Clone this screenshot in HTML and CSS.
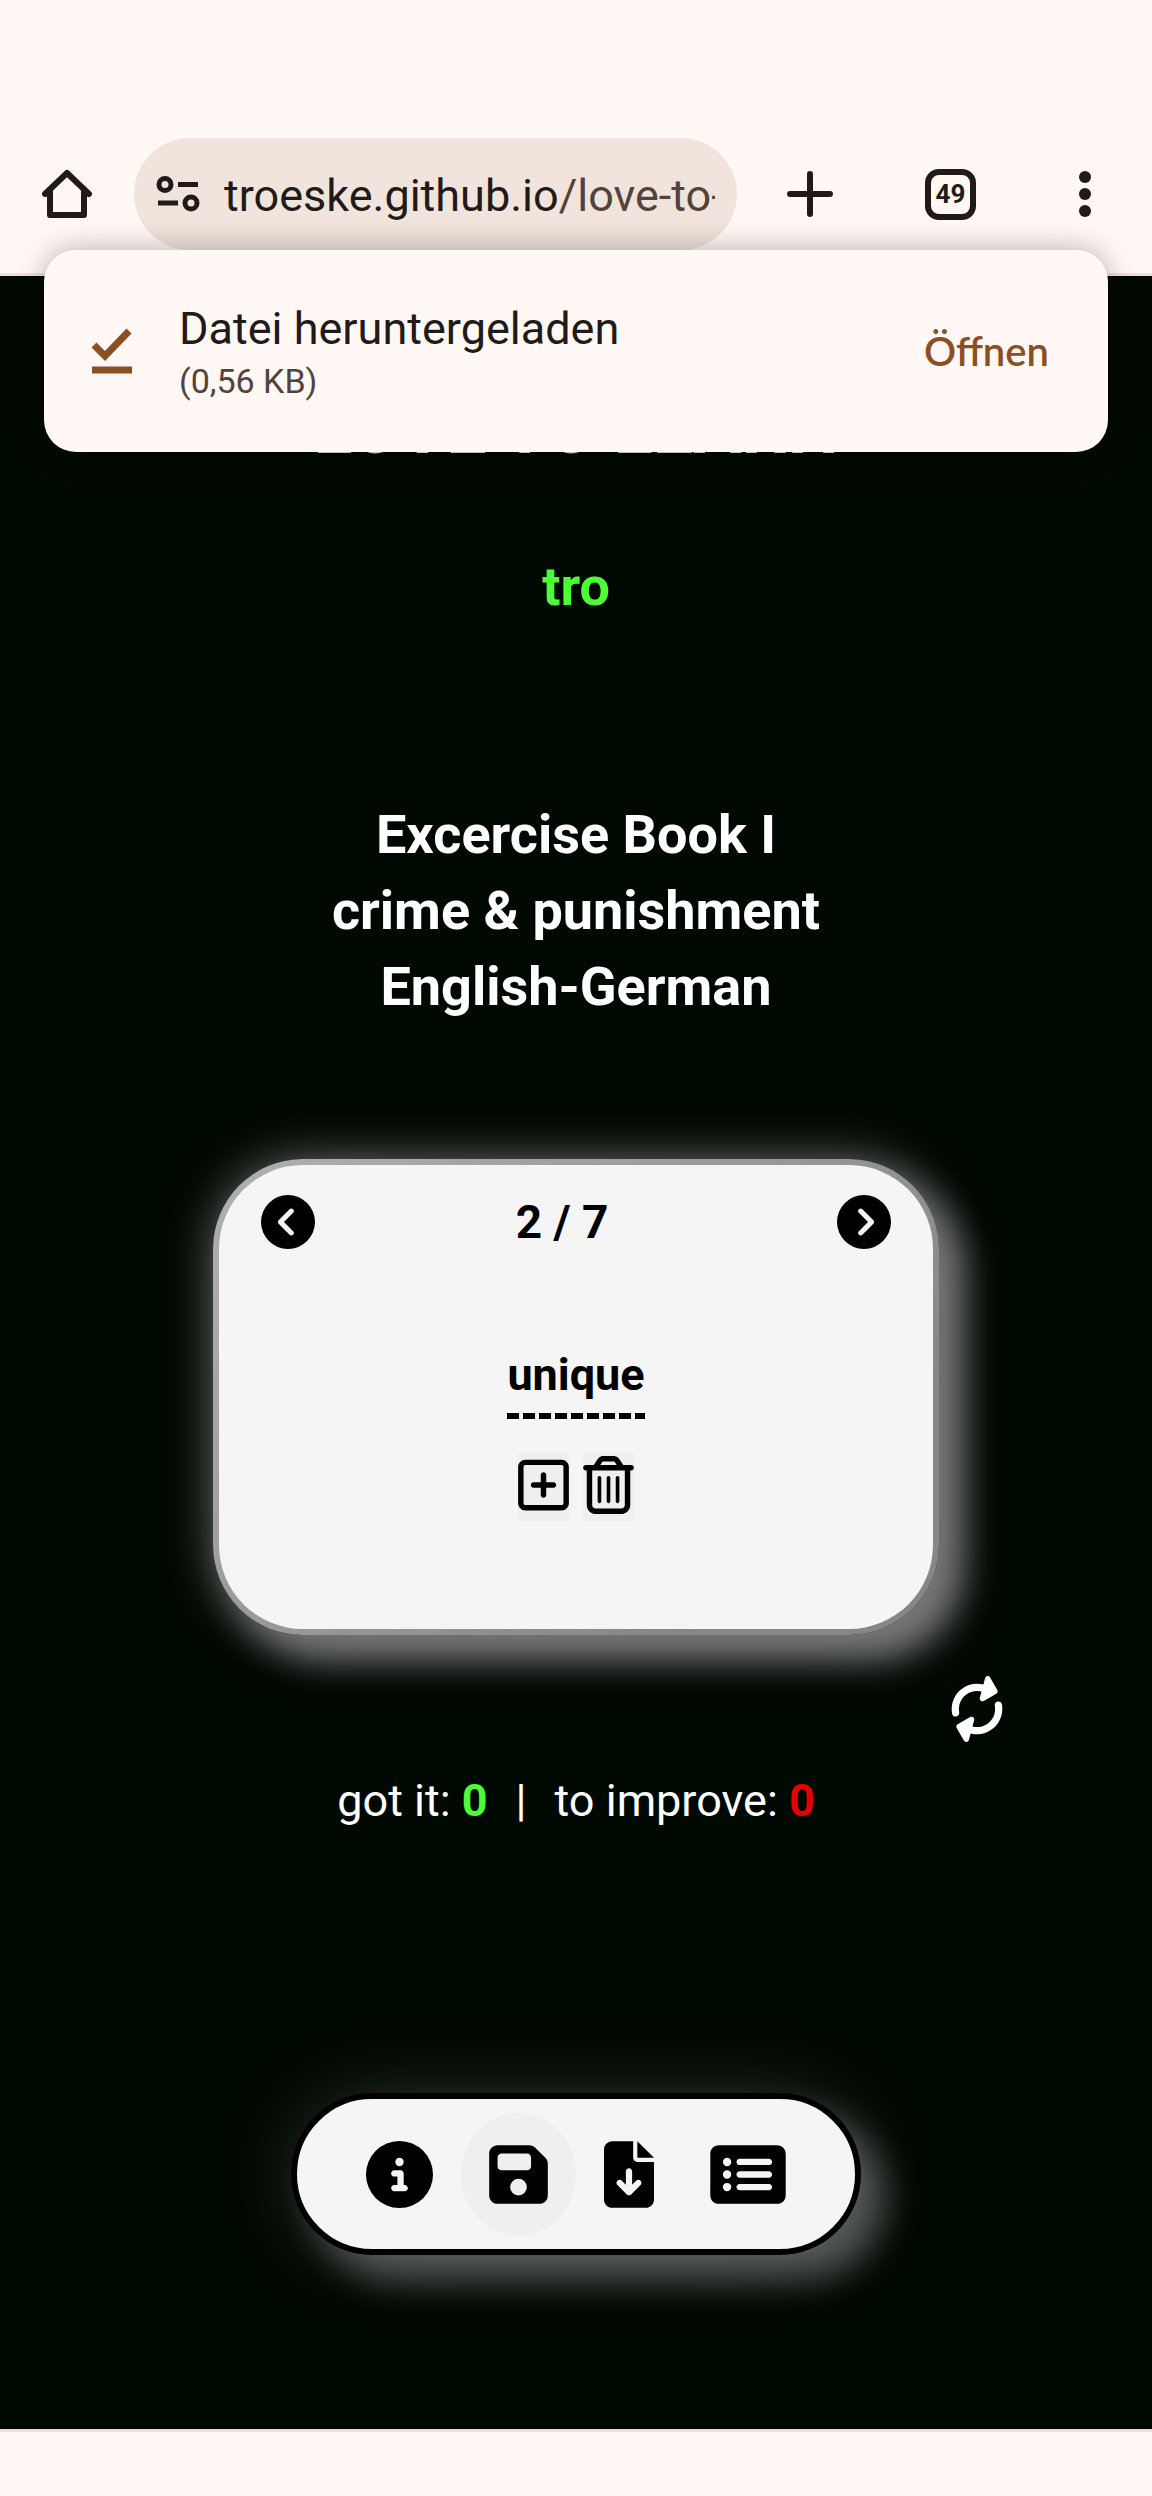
FILE: index.html
```html
<!DOCTYPE html>
<html lang="en">
<head>
<meta charset="utf-8">
<meta name="viewport" content="width=device-width, initial-scale=1">
<title>Love to learn</title>
<link rel="stylesheet" href="styles.css">
</head>
<body>
<header class="toolbar">
  <button class="tool" aria-label="Home"><svg width="50" height="50" viewBox="0 0 50 50" fill="none" stroke="currentColor" stroke-width="6" stroke-linejoin="round" stroke-linecap="round"><path d="M3 25 25 4 47 25M8 22V46H42V22"/></svg></button>
  <div class="address">
    <svg width="44" height="36" viewBox="0 0 44 36" fill="none" stroke="currentColor" stroke-width="5"><circle cx="9" cy="8.500" r="6"/><path d="M22 8.500H42M2 27H22"/><circle cx="35" cy="27" r="6"/></svg>
    <div class="url">troeske.github.io<span class="path">/love-to-</span></div>
  </div>
  <button class="tool" aria-label="New tab"><svg width="46" height="46" viewBox="0 0 46 46" stroke="currentColor" stroke-width="6" stroke-linecap="round"><path d="M3 23H43M23 3V43"/></svg></button>
  <button class="tool tabs" aria-label="Tabs">49</button>
  <button class="tool" aria-label="Menu"><svg width="12" height="46" viewBox="0 0 12 46" fill="currentColor"><circle cx="6" cy="6" r="6"/><circle cx="6" cy="23" r="6"/><circle cx="6" cy="40" r="6"/></svg></button>
</header>

<aside class="toast">
  <svg width="42" height="46" viewBox="0 0 42 46" fill="none" stroke="currentColor" stroke-width="7"><path d="M3 17 14 28 38 3M1 42H41"/></svg>
  <div class="toast-text">
    <div class="toast-title">Datei heruntergeladen</div>
    <div class="toast-size">(0,56 KB)</div>
  </div>
  <button class="open">Öffnen</button>
</aside>

<main class="page">
  <h1 class="brand">LOVE TO LEARN</h1>
  <p class="user">tro</p>
  <h2 class="book">Excercise Book I<br>crime &amp; punishment<br>English-German</h2>

  <section class="card">
    <div class="card-head">
      <button class="icon" aria-label="Previous"><svg width="54" height="54" viewBox="0 0 512 512"><path d="M512 256A256 256 0 1 0 0 256a256 256 0 1 0 512 0zM271 135c9.400-9.400 24.600-9.400 33.900 0s9.400 24.600 0 33.900l-87 87 87 87c9.400 9.400 9.400 24.600 0 33.900s-24.600 9.400-33.900 0L167 273c-9.400-9.400-9.400-24.600 0-33.900L271 135z"/></svg></button>
      <span class="count">2 / 7</span>
      <button class="icon" aria-label="Next"><svg width="54" height="54" viewBox="0 0 512 512"><path transform="matrix(-1 0 0 1 512 0)" d="M512 256A256 256 0 1 0 0 256a256 256 0 1 0 512 0zM271 135c9.400-9.400 24.600-9.400 33.900 0s9.400 24.600 0 33.900l-87 87 87 87c9.400 9.400 9.400 24.600 0 33.900s-24.600 9.400-33.900 0L167 273c-9.400-9.400-9.400-24.600 0-33.900L271 135z"/></svg></button>
    </div>
    <div class="word">unique</div>
    <div class="card-tools">
      <button class="icon edit" aria-label="Add"><svg width="51" height="58" viewBox="0 0 448 512"><path d="M64 80c-8.800 0-16 7.200-16 16V416c0 8.800 7.200 16 16 16H384c8.800 0 16-7.200 16-16V96c0-8.800-7.200-16-16-16H64zM0 96C0 60.700 28.700 32 64 32H384c35.300 0 64 28.700 64 64V416c0 35.300-28.700 64-64 64H64c-35.300 0-64-28.700-64-64V96zM200 344V280H136c-13.300 0-24-10.700-24-24s10.700-24 24-24h64V168c0-13.300 10.700-24 24-24s24 10.700 24 24v64h64c13.300 0 24 10.700 24 24s-10.700 24-24 24H248v64c0 13.300-10.700 24-24 24s-24-10.700-24-24z"/></svg></button>
      <button class="icon edit" aria-label="Delete"><svg width="51" height="58" viewBox="0 0 448 512"><path d="M170.500 51.600L151.500 80h145l-19-28.400c-1.500-2.200-4-3.600-6.700-3.600H177.100c-2.700 0-5.200 1.300-6.700 3.600zm147-26.600L354.200 80H368h48 8c13.300 0 24 10.700 24 24s-10.700 24-24 24h-8V432c0 44.200-35.800 80-80 80H112c-44.200 0-80-35.800-80-80V128H24c-13.300 0-24-10.700-24-24S10.700 80 24 80h8H80 93.800l36.700-55.100C140.900 9.400 158.400 0 177.100 0h93.700c18.700 0 36.200 9.400 46.600 24.900zM80 128V432c0 17.700 14.300 32 32 32H336c17.700 0 32-14.300 32-32V128H80zm80 64V400c0 8.800-7.200 16-16 16s-16-7.200-16-16V192c0-8.800 7.200-16 16-16s16 7.200 16 16zm80 0V400c0 8.800-7.200 16-16 16s-16-7.200-16-16V192c0-8.800 7.200-16 16-16s16 7.200 16 16zm80 0V400c0 8.800-7.200 16-16 16s-16-7.200-16-16V192c0-8.800 7.200-16 16-16s16 7.200 16 16z"/></svg></button>
    </div>
  </section>

  <div class="turn">
    <button class="icon light" aria-label="Turn card"><svg width="68" height="68" viewBox="-34 -34 68 68" fill="currentColor"><path transform="rotate(-30) scale(.113) translate(-256 -256)" d="M142.900 142.900c62.200-62.200 162.700-62.500 225.300-1L327 183c-6.900 6.900-8.900 17.200-5.200 26.200s12.500 14.800 22.200 14.800H472c13.300 0 24-10.700 24-24V72c0-9.700-5.800-18.500-14.800-22.200s-19.300-1.700-26.200 5.200L413.400 96.600c-87.600-86.500-228.700-86.200-315.800 1C73.200 122 55.600 150.700 44.800 181.400c-5.900 16.700 2.900 34.900 19.500 40.800s34.900-2.900 40.800-19.500c7.700-21.800 20.200-42.300 37.800-59.800zM16 312V440c0 9.700 5.800 18.500 14.800 22.200s19.300 1.700 26.200-5.200l41.600-41.600c87.600 86.500 228.700 86.200 315.800-1c24.400-24.400 42.100-53.100 52.900-83.700c5.900-16.700-2.900-34.900-19.500-40.800s-34.900 2.900-40.800 19.500c-7.700 21.800-20.200 42.300-37.800 59.800c-62.200 62.200-162.700 62.500-225.300 1L185 329c6.900-6.900 8.900-17.200 5.200-26.200s-12.500-14.800-22.200-14.800H40c-13.300 0-24 10.700-24 24z"/></svg></button>
  </div>

  <p class="score"><span>got it: <b class="good">0</b></span><span>|</span><span>to improve: <b class="bad">0</b></span></p>

  <nav class="dock">
    <button class="icon" aria-label="Info"><svg width="67" height="67" viewBox="0 0 512 512"><path d="M256 512A256 256 0 1 0 256 0a256 256 0 1 0 0 512zM216 336h24V272H216c-13.300 0-24-10.700-24-24s10.700-24 24-24h48c13.300 0 24 10.700 24 24v88h8c13.300 0 24 10.700 24 24s-10.700 24-24 24H216c-13.300 0-24-10.700-24-24s10.700-24 24-24zm40-208a32 32 0 1 1 0 64 32 32 0 1 1 0-64z"/></svg></button>
    <button class="icon save" aria-label="Save"><svg width="59" height="67" viewBox="0 0 448 512"><path d="M64 32C28.700 32 0 60.700 0 96V416c0 35.300 28.700 64 64 64H384c35.300 0 64-28.700 64-64V173.300c0-17-6.700-33.300-18.700-45.300L352 50.700C340 38.700 323.700 32 306.700 32H64zm0 96c0-17.700 14.300-32 32-32H288c17.700 0 32 14.300 32 32v64c0 17.700-14.300 32-32 32H96c-17.700 0-32-14.300-32-32V128zM224 288a64 64 0 1 1 0 128 64 64 0 1 1 0-128z"/></svg></button>
    <button class="icon" aria-label="Download"><svg width="50" height="67" viewBox="0 0 384 512"><path d="M64 0C28.700 0 0 28.700 0 64V448c0 35.300 28.700 64 64 64H320c35.300 0 64-28.700 64-64V160H256c-17.700 0-32-14.300-32-32V0H64zM256 0V128H384L256 0zM216 232V334.100l31-31c9.400-9.400 24.600-9.400 33.900 0s9.400 24.600 0 33.900l-72 72c-9.400 9.400-24.600 9.400-33.900 0l-72-72c-9.400-9.400-9.400-24.600 0-33.900s24.600-9.400 33.900 0l31 31V232c0-13.300 10.700-24 24-24s24 10.700 24 24z"/></svg></button>
    <button class="icon list" aria-label="Word list"><svg width="76" height="67" viewBox="0 0 576 512"><path d="M0 96C0 60.700 28.700 32 64 32H512c35.300 0 64 28.700 64 64V416c0 35.300-28.700 64-64 64H64c-35.300 0-64-28.700-64-64V96zM128 288a32 32 0 1 0 0-64 32 32 0 1 0 0 64zm32-128a32 32 0 1 0 -64 0 32 32 0 1 0 64 0zM128 384a32 32 0 1 0 0-64 32 32 0 1 0 0 64zm96-248c-13.300 0-24 10.700-24 24s10.700 24 24 24H448c13.300 0 24-10.700 24-24s-10.700-24-24-24H224zm0 96c-13.300 0-24 10.700-24 24s10.700 24 24 24H448c13.300 0 24-10.700 24-24s-10.700-24-24-24H224zm0 96c-13.300 0-24 10.700-24 24s10.700 24 24 24H448c13.300 0 24-10.700 24-24s-10.700-24-24-24H224z"/></svg></button>
  </nav>
</main>
<footer class="system"></footer>
</body>
</html>
```
FILE: styles.css
```css
* { box-sizing: border-box; }

body {
  margin: 0;
  min-height: 100vh;
  display: flex;
  flex-direction: column;
  position: relative;
  background: #fff8f5;
  color: #201a18;
  font-family: Roboto, sans-serif;
  font-size: 45px;
}

h1, h2, p { margin: 0; }

button {
  border: 0;
  padding: 0;
  background: none;
  color: inherit;
  font: inherit;
}

svg { display: block; }

/* Browser bar */
.toolbar {
  display: flex;
  align-items: center;
  padding: 138px 61px 23px 42px;
  border-bottom: 3px solid #f3dfd7;
}

.address {
  flex: 1;
  min-width: 0;
  display: flex;
  align-items: center;
  gap: 24px;
  height: 112px;
  margin-left: 42px;
  padding: 0 22px;
  border-radius: 56px;
  background: #f0e4dc;
}

.address svg { flex: none; }

.url {
  flex: 1;
  min-width: 0;
  padding-top: 4px;
  overflow: hidden;
  white-space: nowrap;
  line-height: 60px;
}

.path { color: #53433c; }

.address + .tool { margin-left: 50px; }

.tool + .tool { margin-left: 92px; }

.tool.tabs {
  width: 51px;
  height: 51px;
  border: 6px solid;
  border-radius: 14px;
  font-size: 26px;
  font-weight: 700;
  line-height: 38px;
}

.tool.tabs + .tool { margin-left: 103px; }

/* Download notice, floating over the page */
.toast {
  position: absolute;
  top: 250px;
  left: 44px;
  right: 44px;
  display: flex;
  align-items: center;
  gap: 46px;
  padding: 49px 59px 49px 47px;
  border-radius: 32px;
  background: #fff8f5;
  box-shadow: 0 0 30px rgba(0, 0, 0, .3);
  color: #8b4f24;
}

.toast-text { flex: 1; }

.toast-title {
  color: #201a18;
  line-height: 60px;
}

.toast-size {
  color: #53433c;
  font-size: 34px;
  line-height: 44px;
}

.open {
  font-family: Lato, sans-serif;
  font-size: 40px;
  font-weight: 600;
}

/* Flash card page */
.page {
  flex: 1;
  display: flex;
  flex-direction: column;
  align-items: center;
  padding: 112px 0 173px;
  background: #000802;
  color: #fff;
}

.brand {
  color: #ddd;
  font-size: 72px;
  line-height: 82px;
}

.user {
  margin-top: 78px;
  color: #4cff37;
  font-size: 54px;
  font-weight: 700;
  line-height: 77px;
}

.book {
  margin-top: 172px;
  font-size: 54px;
  line-height: 76px;
  text-align: center;
}

.card {
  display: flex;
  flex-direction: column;
  align-items: center;
  width: 63%;
  height: 476px;
  margin-top: 134px;
  padding: 30px 42px;
  border: 6px solid transparent;
  border-radius: 90px;
  background:
    linear-gradient(#f5f5f5, #f5f5f5) padding-box,
    linear-gradient(135deg, #b0b0b0, #868686 80%) border-box;
  box-shadow: 24px 24px 36px #777, 0 0 48px rgba(245, 245, 245, .4);
  color: #000;
  font-weight: 700;
}

.card-head {
  align-self: stretch;
  display: flex;
  align-items: center;
  justify-content: space-between;
}

.count {
  padding-right: 28px;
  font-size: 46px;
}

.word {
  margin-top: 96px;
  padding-bottom: 14px;
  background: linear-gradient(90deg, #000 12px, transparent 12px) left bottom / 16px 6px repeat-x;
  line-height: 60px;
}

.card-tools {
  display: flex;
  gap: 14px;
  margin-top: 34px;
}

.edit {
  height: 68px;
  padding-bottom: 4px;
  background: #efefef;
}

.turn {
  display: flex;
  justify-content: flex-end;
  width: 63%;
  height: 68px;
  margin-top: 40px;
}

.light {
  flex: none;
  margin-right: -72px;
  color: #fff;
}

.score {
  display: flex;
  gap: 28px;
  margin-top: 28px;
  line-height: 60px;
}

.good { color: #4cff37; }

.bad { color: #e60000; }

/* Bottom actions */
.dock {
  display: flex;
  align-items: center;
  height: 162px;
  margin-top: 262px;
  padding: 0 69px;
  border: 6px solid #000;
  border-radius: 81px;
  background: #f5f5f5;
  box-shadow: 24px 24px 36px rgba(245, 245, 245, .3), 0 0 75px rgba(245, 245, 245, .15);
  color: #000;
}

.save {
  margin: 0 28px;
  padding: 28px;
  border-radius: 50%;
  background: #efefef;
}

.list { margin-left: 56px; }

.system {
  height: 67px;
  border-top: 3px solid #f8dcd4;
}
```
